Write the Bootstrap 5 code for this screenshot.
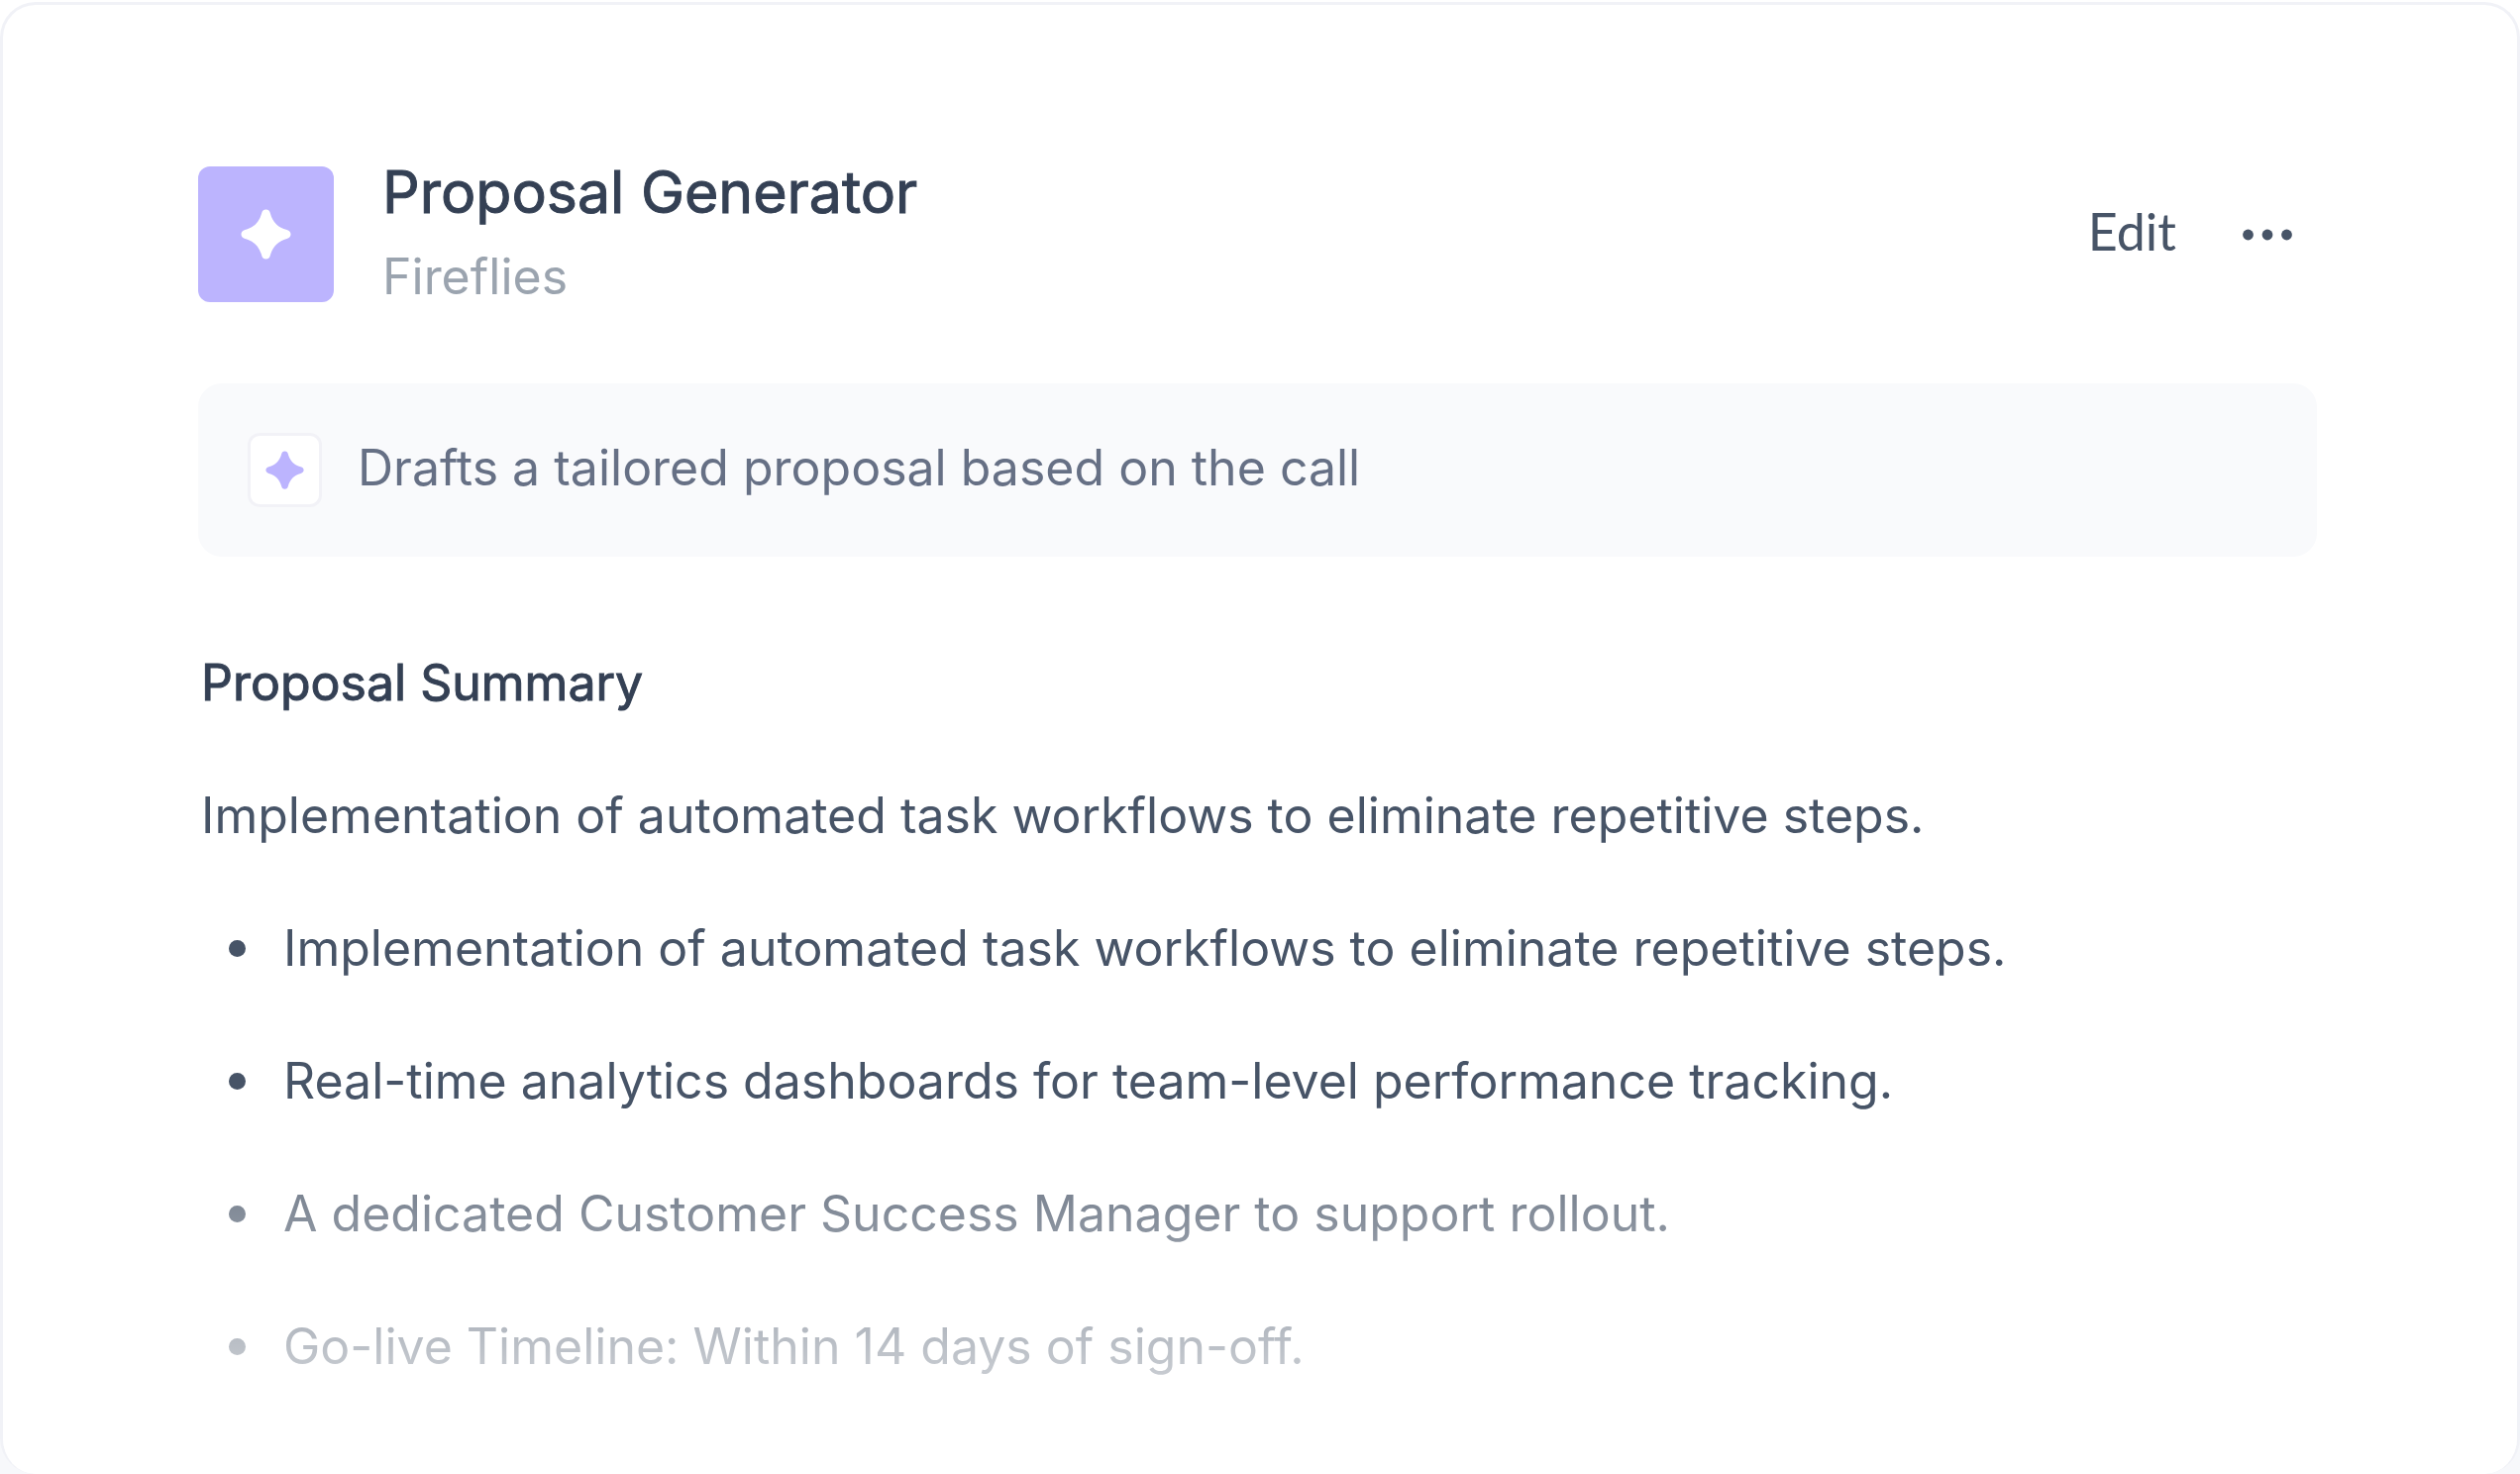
<!DOCTYPE html>
<html lang="en">
<head>
<meta charset="utf-8">
<meta name="viewport" content="width=device-width, initial-scale=1">
<title>Proposal Generator</title>
<link href="https://cdn.jsdelivr.net/npm/bootstrap@5.3.0/dist/css/bootstrap.min.css" rel="stylesheet">
<style>
  body { font-family: Inter, "Liberation Sans", sans-serif; font-size: 50px; line-height: 64px; color: #475467; background: linear-gradient(#fff 80%, #f7f8fb 98%); padding-top: 2px; }
  .panel { border: 3px solid #f1f2f7; border-bottom: 0; border-radius: 36px; background: #fff; padding: 155px 202px 0 197px; overflow: hidden; }
  .app-tile { width: 137px; height: 137px; border-radius: 12px; background: #bcb4fe; color: #fff; }
  .app-title, .summary-title { font-weight: 400; color: #344054; -webkit-text-stroke: 1px #344054; }
  .app-title { font-size: 59px; line-height: 68px; margin-bottom: 17px; }
  .app-source { line-height: 68px; color: #9ba4af; }
  .header-gap { gap: 49px; }
  .actions { gap: 67px; margin-right: 25px; }
  .actions .btn { --bs-btn-padding-x: 0; --bs-btn-padding-y: 0; --bs-btn-border-width: 0; --bs-btn-color: #475467; --bs-btn-font-size: 52px; --bs-btn-line-height: 64px; font-family: Lato, sans-serif; }
  .callout { margin-top: 74px; padding: 50px; gap: 36px; border-radius: 24px; background: #f9fafc; color: #667085; }
  .callout-text { padding-bottom: 6px; }
  .mini-tile { width: 75px; height: 75px; border: 3px solid #f2f2f7; border-radius: 12px; background: #fff; color: #bcb4fe; }
  .summary { margin-top: 95px; padding-left: 3px; gap: 70px; }
  .summary-title { font-size: 50px; line-height: 64px; }
  .points { gap: 70px; padding-left: 28px; }
  .points li { gap: 38px; }
  .points li::before { content: ""; flex: none; width: 17px; height: 17px; border-radius: 50%; background: currentColor; }
  .fade-out { height: 296px; border-radius: 0 0 36px 36px; background: linear-gradient(rgba(255,255,255,.26), rgba(255,255,255,.92)); margin: 0 -3px; }
</style>
</head>
<body class="d-flex flex-column min-vh-100">
<main class="panel flex-grow-1 position-relative">
  <header class="d-flex align-items-center justify-content-between">
    <div class="d-flex align-items-center header-gap">
      <div class="app-tile d-flex align-items-center justify-content-center flex-shrink-0">
        <svg width="51" height="51" viewBox="0 0 52 52" fill="currentColor" aria-hidden="true"><path d="M26 0.5C28.500 .5 30 2 30.500 4.500C33 13.500 38.500 19 47.500 21.500C50.200 22.200 51.500 24 51.500 26C51.500 28 50.200 29.800 47.500 30.500C38.500 33 33 38.500 30.500 47.500C30 50 28.500 51.500 26 51.500C23.500 51.500 22 50 21.500 47.500C19 38.500 13.500 33 4.500 30.500C1.800 29.800.5 28 .5 26C.5 24 1.800 22.200 4.500 21.500C13.500 19 19 13.500 21.500 4.500C22 2 23.500 .5 26 .5Z"/></svg>
      </div>
      <div>
        <h1 class="app-title">Proposal Generator</h1>
        <p class="app-source mb-0">Fireflies</p>
      </div>
    </div>
    <div class="actions d-flex align-items-center">
      <button type="button" class="btn pb-2">Edit</button>
      <button type="button" class="btn d-flex" aria-label="More options">
        <svg width="50" height="12" viewBox="0 0 50 12" fill="currentColor" aria-hidden="true"><circle cx="5.500" cy="6" r="5.400"/><circle cx="25" cy="6" r="5.400"/><circle cx="44.500" cy="6" r="5.400"/></svg>
      </button>
    </div>
  </header>

  <section class="callout d-flex align-items-center">
    <div class="mini-tile d-flex align-items-center justify-content-center flex-shrink-0">
      <svg width="39" height="39" viewBox="0 0 52 52" fill="currentColor" aria-hidden="true"><path d="M26 0.5C28.500 .5 30 2 30.500 4.500C33 13.500 38.500 19 47.500 21.500C50.200 22.200 51.500 24 51.500 26C51.500 28 50.200 29.800 47.500 30.500C38.500 33 33 38.500 30.500 47.500C30 50 28.500 51.500 26 51.500C23.500 51.500 22 50 21.500 47.500C19 38.500 13.500 33 4.500 30.500C1.800 29.800.5 28 .5 26C.5 24 1.800 22.200 4.500 21.500C13.500 19 19 13.500 21.500 4.500C22 2 23.500 .5 26 .5Z"/></svg>
    </div>
    <p class="callout-text mb-0">Drafts a tailored proposal based on the call</p>
  </section>

  <article class="summary d-flex flex-column">
    <h2 class="summary-title mb-0">Proposal Summary</h2>
    <p class="mb-0">Implementation of automated task workflows to eliminate repetitive steps.</p>
    <ul class="points list-unstyled d-flex flex-column mb-0">
      <li class="d-flex align-items-center">Implementation of automated task workflows to eliminate repetitive steps.</li>
      <li class="d-flex align-items-center">Real-time analytics dashboards for team-level performance tracking.</li>
      <li class="d-flex align-items-center">A dedicated Customer Success Manager to support rollout.</li>
      <li class="d-flex align-items-center">Go-live Timeline: Within 14 days of sign-off.</li>
    </ul>
  </article>
  <div class="fade-out position-absolute bottom-0 start-0 end-0 pe-none"></div>
</main>
<script src="https://cdn.jsdelivr.net/npm/bootstrap@5.3.0/dist/js/bootstrap.bundle.min.js"></script>
</body>
</html>
